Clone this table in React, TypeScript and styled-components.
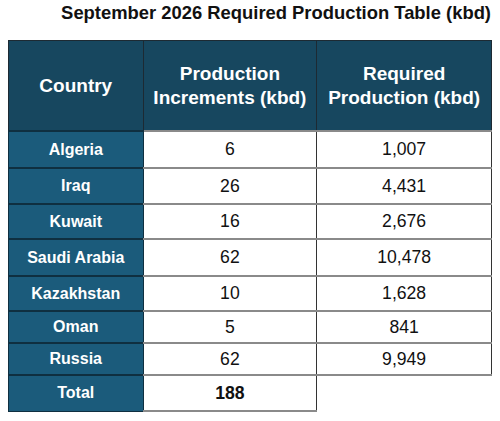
import styled, { createGlobalStyle } from 'styled-components';

const GlobalStyle = createGlobalStyle`
  body {
    margin: 0;
    background: #ffffff;
    font-family: 'Liberation Sans', Arial, sans-serif;
  }
`;

const StyledWrapper = styled.div`
  width: 500px;
  height: 421px;
  padding: 0 8px;
  box-sizing: border-box;
`;

const StyledH1 = styled.h1`
  margin: 0;
  padding: 2px 1px 0 0;
  height: 40px;
  box-sizing: border-box;
  text-align: right;
  font-size: 18.4px;
  font-weight: 700;
  color: #111111;
`;

const StyledTable = styled.table`
  width: 484px;
  border-collapse: collapse;
  table-layout: fixed;
`;

const HeadCell = styled.th<{ $width: number }>`
  width: ${(p) => p.$width}px;
  height: 89px;
  padding: 0;
  background: #17475f;
  color: #ffffff;
  font-size: 19px;
  font-weight: 700;
  line-height: 24px;
  text-align: center;
  border: 1px solid #1d2a33;
`;

const Row = styled.tr<{ $height: number }>`
  height: ${(p) => p.$height}px;
`;

const CountryCell = styled.td`
  padding: 0;
  background: #1b5b7b;
  color: #ffffff;
  font-size: 16px;
  font-weight: 700;
  text-align: center;
  border: 1px solid #0f2f40;
  border-top-width: 2px;
`;

const ValueCell = styled.td<{ $bold?: boolean }>`
  padding: 0;
  background: #ffffff;
  color: #111111;
  font-size: 17.6px;
  font-weight: ${(p) => (p.$bold ? 700 : 400)};
  text-align: center;
  border-left: 1px solid #333333;
  border-right: 1px solid #333333;
  border-top: 2px solid #8a8a8a;
  border-bottom: 2px solid #8a8a8a;
`;

const EmptyCell = styled.td`
  padding: 0;
  border: none;
  border-top: 2px solid #8a8a8a;
`;

const rows = [
  { country: 'Algeria', inc: '6', req: '1,007', h: 37 },
  { country: 'Iraq', inc: '26', req: '4,431', h: 36 },
  { country: 'Kuwait', inc: '16', req: '2,676', h: 35 },
  { country: 'Saudi Arabia', inc: '62', req: '10,478', h: 37 },
  { country: 'Kazakhstan', inc: '10', req: '1,628', h: 35 },
  { country: 'Oman', inc: '5', req: '841', h: 32 },
  { country: 'Russia', inc: '62', req: '9,949', h: 32 },
];

const App = () => {
  return (
    <>
      <GlobalStyle />
      <StyledWrapper>
        <StyledH1>September 2026 Required Production Table (kbd)</StyledH1>
        <StyledTable>
          <thead>
            <tr>
              <HeadCell $width={133}>Country</HeadCell>
              <HeadCell $width={172}>
                Production
                <br />
                Increments (kbd)
              </HeadCell>
              <HeadCell $width={173}>
                Required
                <br />
                Production (kbd)
              </HeadCell>
            </tr>
          </thead>
          <tbody>
            {rows.map((r) => (
              <Row key={r.country} $height={r.h}>
                <CountryCell>{r.country}</CountryCell>
                <ValueCell>{r.inc}</ValueCell>
                <ValueCell>{r.req}</ValueCell>
              </Row>
            ))}
            <Row $height={36}>
              <CountryCell>Total</CountryCell>
              <ValueCell $bold>188</ValueCell>
              <EmptyCell />
            </Row>
          </tbody>
        </StyledTable>
      </StyledWrapper>
    </>
  );
};

export default App;
